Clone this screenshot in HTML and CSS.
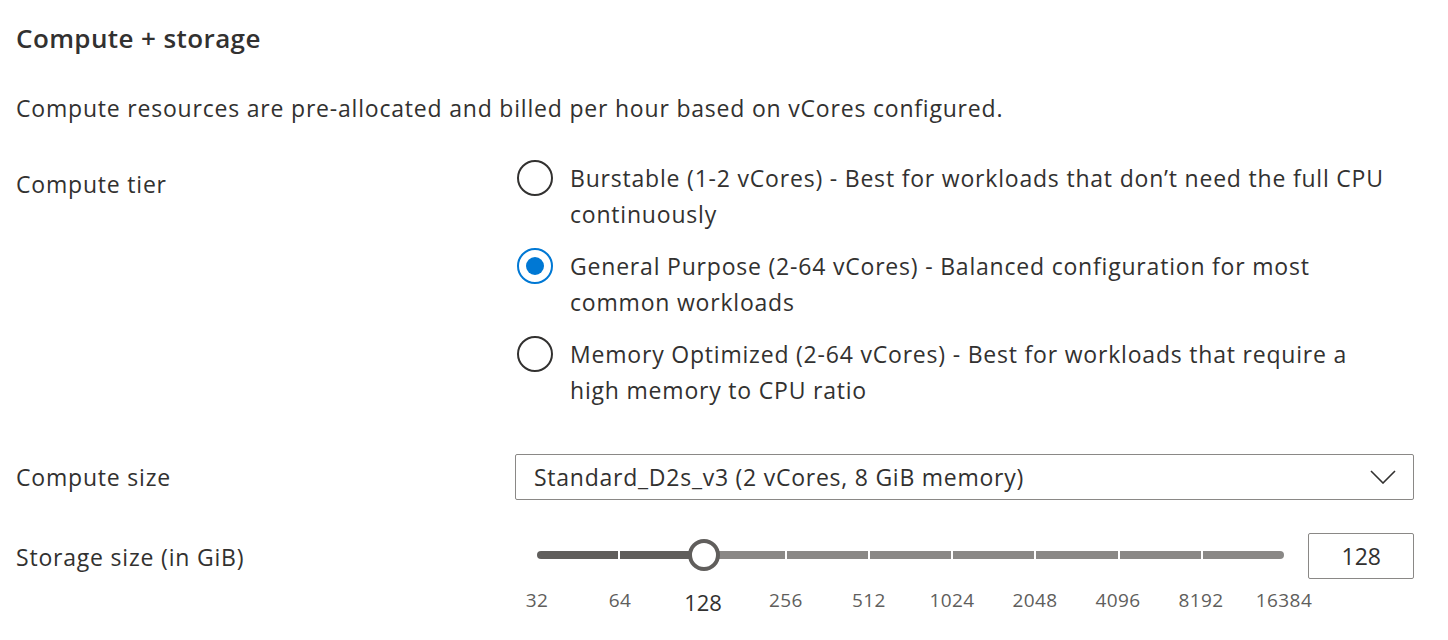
FILE: index.html
```html
<!DOCTYPE html>
<html lang="en">
<head>
<meta charset="utf-8">
<title>Compute + storage</title>
<link rel="stylesheet" href="styles.css">
</head>
<body>
<div class="page">
  <h2 class="title">Compute + storage</h2>
  <p class="desc">Compute resources are pre-allocated and billed per hour based on vCores configured.</p>

  <div class="row row-tier">
    <div class="label label-tier">Compute tier</div>
    <div class="options">
      <div class="option">
        <span class="radio"></span>
        <span class="opt-text">Burstable (1-2 vCores) - Best for workloads that don’t need the full CPU continuously</span>
      </div>
      <div class="option">
        <span class="radio checked"></span>
        <span class="opt-text">General Purpose (2-64 vCores) - Balanced configuration for most common workloads</span>
      </div>
      <div class="option">
        <span class="radio"></span>
        <span class="opt-text">Memory Optimized (2-64 vCores) - Best for workloads that require a high memory to CPU ratio</span>
      </div>
    </div>
  </div>

  <div class="row row-size">
    <div class="label">Compute size</div>
    <div class="dropdown">
      <span class="dd-text">Standard_D2s_v3 (2 vCores, 8 GiB memory)</span>
      <svg class="chevron" width="26" height="14" viewBox="0 0 26 14"><polyline points="1,1 13,13 25,1" fill="none" stroke="#323130" stroke-width="1.6"/></svg>
    </div>
  </div>

  <div class="row row-storage">
    <div class="label">Storage size (in GiB)</div>
    <div class="storage-ctl">
      <div class="slider">
        <div class="track">
          <span class="seg active"></span><span class="seg active"></span><span class="seg"></span><span class="seg"></span><span class="seg"></span><span class="seg"></span><span class="seg"></span><span class="seg"></span><span class="seg"></span>
          <span class="thumb"></span>
        </div>
        <div class="ticks">
          <span>32</span><span>64</span><span class="sel">128</span><span>256</span><span>512</span><span>1024</span><span>2048</span><span>4096</span><span>8192</span><span>16384</span>
        </div>
      </div>
      <div class="num-input">128</div>
    </div>
  </div>
</div>
</body>
</html>
```
FILE: styles.css
```css
html, body {
  margin: 0;
  padding: 0;
  background: #ffffff;
}
body {
  font-family: "Open Sans", "Noto Sans", "Liberation Sans", sans-serif;
  color: #323130;
}
.page {
  padding: 22px 0 0 16px;
  width: 1398px;
}
.title {
  margin: 0;
  font-size: 26px;
  line-height: 32px;
  font-weight: 600;
  letter-spacing: 0.4px;
}
.desc {
  margin: 38px 0 0;
  font-size: 23px;
  line-height: 32px;
  letter-spacing: 0.8px;
}
.row {
  display: grid;
  grid-template-columns: 499px 1fr;
  align-items: center;
}
.label {
  font-size: 23px;
  line-height: 32px;
  letter-spacing: 0.8px;
}
.row-tier {
  margin-top: 36px;
  align-items: start;
}
.label-tier {
  padding-top: 8px;
}
.options {
  display: flex;
  flex-direction: column;
  gap: 16px;
}
.option {
  display: flex;
  align-items: flex-start;
  gap: 17px;
  padding-left: 2px;
}
.opt-text {
  font-size: 23px;
  line-height: 36px;
  letter-spacing: 0.8px;
  width: 828px;
}
.radio {
  flex: none;
  box-sizing: border-box;
  width: 36px;
  height: 36px;
  border: 2px solid #323130;
  border-radius: 50%;
  display: flex;
  align-items: center;
  justify-content: center;
}
.radio.checked {
  border-color: #0078d4;
}
.radio.checked::after {
  content: "";
  width: 18px;
  height: 18px;
  border-radius: 50%;
  background: #0078d4;
}
.row-size {
  margin-top: 46px;
}
.dropdown {
  box-sizing: border-box;
  height: 46px;
  border: 1px solid #8a8886;
  border-radius: 2px;
  display: flex;
  align-items: center;
  justify-content: space-between;
  padding: 0 17px 0 18px;
  font-size: 23px;
  letter-spacing: 0.75px;
}
.row-storage {
  margin-top: 33px;
  align-items: start;
}
.row-storage .label {
  padding-top: 8px;
}
.storage-ctl {
  display: flex;
  align-items: flex-start;
  gap: 12px;
}
.slider {
  flex: none;
  width: 781px;
  padding: 18px 0 0 22px;
  box-sizing: border-box;
}
.track {
  position: relative;
  display: flex;
  gap: 2px;
  width: 747px;
  height: 8px;
}
.seg {
  flex: 1;
  background: #8a8886;
}
.seg.active {
  background: #605e5c;
}
.seg:first-child {
  border-radius: 4px 0 0 4px;
}
.seg:nth-child(9) {
  border-radius: 0 4px 4px 0;
}
.thumb {
  position: absolute;
  left: 167px;
  top: 50%;
  width: 32px;
  height: 32px;
  box-sizing: border-box;
  margin: -16px 0 0 -16px;
  border: 4px solid #605e5c;
  border-radius: 50%;
  background: #ffffff;
}
.ticks {
  display: flex;
  align-items: flex-start;
  width: 830px;
  margin: 27px 0 0 -41.5px;
}
.ticks span {
  flex: none;
  width: 83px;
  text-align: center;
  font-size: 19px;
  line-height: 28px;
  letter-spacing: 0.4px;
  color: #605e5c;
}
.ticks span.sel {
  font-size: 22px;
  color: #323130;
  line-height: 32px;
  letter-spacing: 0;
}
.num-input {
  flex: none;
  box-sizing: border-box;
  width: 106px;
  height: 46px;
  border: 1px solid #8a8886;
  border-radius: 2px;
  font-size: 23px;
  line-height: 44px;
  text-align: right;
  padding-right: 32px;
}
```
